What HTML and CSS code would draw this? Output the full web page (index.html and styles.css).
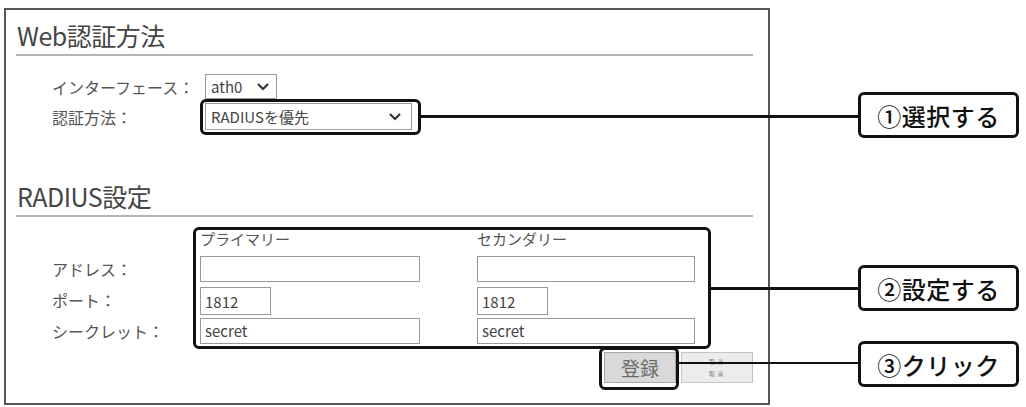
FILE: index.html
```html
<!DOCTYPE html>
<html lang="ja">
  <head>
    <meta charset="utf-8">
    <title>Web認証方法</title>
    <link rel="stylesheet" href="styles.css">
  </head>
  <body>

  <div class="sheet">

    <div class="panel">
      <h2 class="section-title">Web認証方法</h2>

      <div class="fields">
        <span class="label">インターフェース：</span>
        <div class="select select-small">
          <span>ath0</span>
          <svg width="14" height="10" viewBox="0 0 14 10"><path d="M2 2 L7 7 L12 2" fill="none" stroke="#333" stroke-width="2.2"/></svg>
        </div>
        <span class="label">認証方法：</span>
        <div class="select select-wide">
          <span>RADIUSを優先</span>
          <svg width="14" height="10" viewBox="0 0 14 10"><path d="M2 2 L7 7 L12 2" fill="none" stroke="#333" stroke-width="2.2"/></svg>
        </div>
      </div>

      <h2 class="section-title section-radius">RADIUS設定</h2>

      <div class="radius">
        <span></span>
        <span class="head">プライマリー</span>
        <span class="head">セカンダリー</span>

        <span class="label">アドレス：</span>
        <div class="input input-wide"></div>
        <div class="input input-wide input-second"></div>

        <span class="label">ポート：</span>
        <div class="input input-port">1812</div>
        <div class="input input-port">1812</div>

        <span class="label">シークレット：</span>
        <div class="input input-wide">secret</div>
        <div class="input input-wide input-second">secret</div>
      </div>

      <div class="buttons">
        <div class="btn btn-save">登録</div>
        <div class="btn btn-cancel"><span>取消</span><span>取消</span></div>
      </div>
    </div>

    <!-- annotations -->
    <div class="mark mark-select"></div>
    <div class="mark mark-table"></div>
    <div class="mark mark-button"></div>

    <div class="lead lead-1"></div>
    <div class="lead lead-2"></div>
    <div class="lead lead-3"></div>

    <div class="callout callout-1">①選択する</div>
    <div class="callout callout-2">②設定する</div>
    <div class="callout callout-3">③クリック</div>

  </div>

  </body>
</html>
```

FILE: styles.css
```css
html, body {
  margin: 0;
  padding: 0;
  background: #ffffff;
}

body {
  font-family: "Noto Sans CJK JP", "DejaVu Sans", sans-serif;
  color: #555;
}

.sheet {
  position: relative;
  width: 1026px;
  height: 407px;
  overflow: hidden;
}

.panel {
  margin: 8px 0 0 4px;
  width: 766px;
  height: 397px;
  box-sizing: border-box;
  border: 2px solid #555;
  padding: 10px 15px 0 10px;
}

.section-title {
  margin: 0;
  font-size: 25px;
  line-height: 30px;
  font-weight: normal;
  color: #454545;
  letter-spacing: -0.5px;
  padding: 0 0 4px 1px;
  border-bottom: 2px solid #b4b4b4;
}

.section-radius {
  margin-top: 51px;
}

.label {
  font-size: 16px;
  color: #555;
  align-self: center;
  white-space: nowrap;
}

/* top form */
.fields {
  margin-top: 18px;
  padding-left: 36px;
  display: grid;
  grid-template-columns: 153px auto;
  row-gap: 4px;
  justify-items: start;
}

.select {
  display: flex;
  align-items: center;
  justify-content: space-between;
  box-sizing: border-box;
  border: 1px solid #999;
  background: #fff;
  font-size: 15px;
  color: #444;
  padding: 0 6px 0 5px;
}

.select-small {
  width: 72px;
  height: 25px;
}

.select-wide {
  width: 207px;
  height: 27px;
  padding-right: 9px;
}

/* radius table */
.radius {
  margin-top: 10px;
  padding-left: 36px;
  display: grid;
  grid-template-columns: 148px 277px auto;
  grid-template-rows: 24px 26px 26px 26px;
  row-gap: 5px;
  justify-items: start;
}

.head {
  font-size: 15px;
  color: #555;
  line-height: 24px;
}

.input {
  box-sizing: border-box;
  height: 26px;
  border: 1px solid #999;
  background: #fff;
  font-size: 15px;
  line-height: 24px;
  color: #444;
  padding-left: 4px;
}

.input-wide {
  width: 220px;
}

.input-second {
  width: 218px;
}

.input-port {
  width: 71px;
  height: 28px;
  line-height: 27px;
}

/* buttons */
.buttons {
  margin-top: 8px;
  display: flex;
  justify-content: flex-end;
  gap: 5px;
}

.btn {
  box-sizing: border-box;
  width: 72px;
  height: 31px;
  display: flex;
  align-items: center;
  justify-content: center;
}

.btn-save {
  background: #d9d9d9;
  border: 1px solid #a8a8a8;
  font-size: 19px;
  color: #6a6a6a;
}

.btn-cancel {
  background: #ececec;
  border: 1px solid #c4c4c4;
  flex-direction: column;
  gap: 6px;
  font-size: 6px;
  line-height: 6px;
  color: #888;
  letter-spacing: 2px;
}

/* annotations */
.mark {
  position: absolute;
  box-sizing: border-box;
  border: 3px solid #111;
  border-radius: 6px;
}

.mark-select {
  left: 200px;
  top: 99px;
  width: 221px;
  height: 36px;
}

.mark-table {
  left: 193px;
  top: 227px;
  width: 518px;
  height: 122px;
}

.mark-button {
  left: 599px;
  top: 347px;
  width: 80px;
  height: 43px;
}

.lead {
  position: absolute;
  background: #111;
  height: 3px;
}

.lead-1 {
  left: 420px;
  top: 115px;
  width: 440px;
}

.lead-2 {
  left: 710px;
  top: 287px;
  width: 150px;
}

.lead-3 {
  left: 678px;
  top: 362px;
  width: 182px;
  height: 2px;
}

.callout {
  position: absolute;
  left: 858px;
  width: 161px;
  height: 46px;
  box-sizing: border-box;
  border: 3px solid #111;
  border-radius: 6px;
  background: #fff;
  display: flex;
  align-items: center;
  justify-content: center;
  font-size: 24px;
  font-weight: 500;
  color: #111;
  letter-spacing: 0.5px;
}

.callout-1 {
  top: 92px;
}

.callout-2 {
  top: 265px;
}

.callout-3 {
  top: 341px;
}
```
